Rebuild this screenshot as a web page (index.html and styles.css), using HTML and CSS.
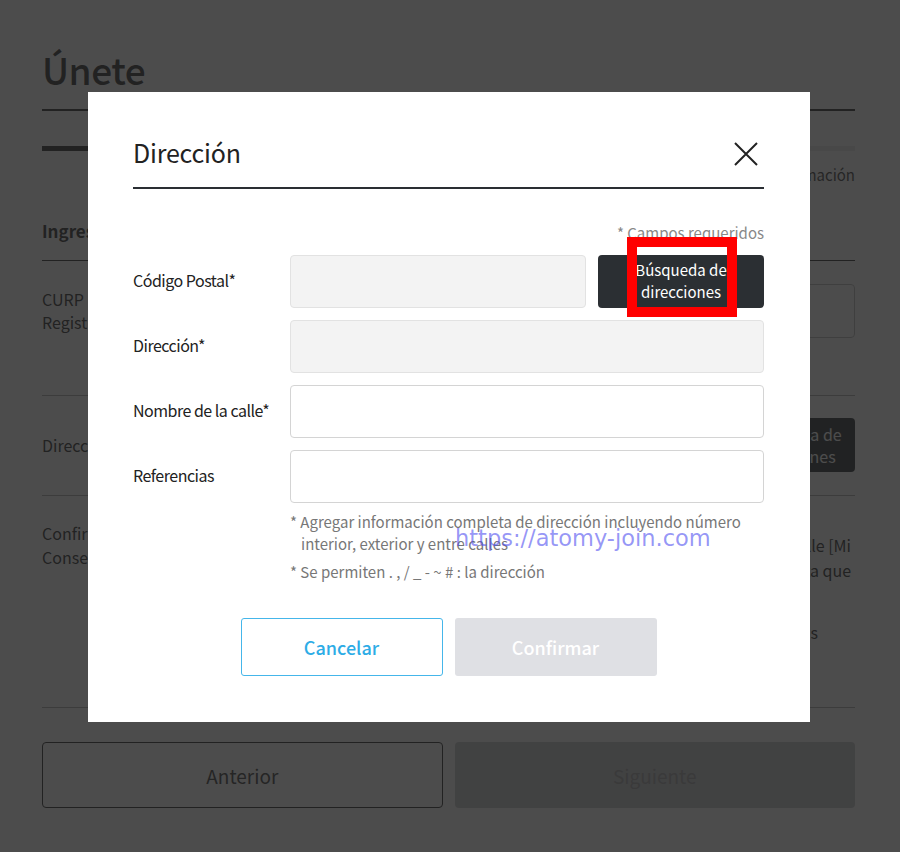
FILE: index.html
```html
<!DOCTYPE html>
<html lang="es">
<head>
<meta charset="utf-8">
<title>Únete</title>
<link rel="stylesheet" href="styles.css">
</head>
<body>
<div class="page">
  <header class="page-head"><h1>Únete</h1></header>
  <div class="steps">
    <div class="step active"><span class="step-bar"></span><span class="step-label">Verificación</span></div>
    <div class="step"><span class="step-bar"></span><span class="step-label">Información</span></div>
    <div class="step"><span class="step-bar"></span><span class="step-label">Confirmación</span></div>
  </div>
  <section class="section">
    <h2 class="section-title">Ingresar información</h2>
    <div class="row row-curp">
      <div class="row-label">CURP (Clave Única de<br>Registro de Población)</div>
      <div class="row-field"><div class="page-input"></div></div>
    </div>
    <div class="row row-addr">
      <div class="row-label">Dirección*</div>
      <div class="row-field"><button class="page-search" type="button">Búsqueda de<br>direcciones</button></div>
    </div>
    <div class="row row-consent">
      <div class="row-label">Confirmación de<br>Consentimiento</div>
      <div class="row-field consent-text">
        <p class="consent-p">Puede consultar los contratos aceptados en la página de detalle [Mi</p>
        <p class="consent-p">Oficina] y la información quedará registrada hasta que</p>
        <p class="consent-p consent-last">Acepto todos los términos</p>
      </div>
    </div>
  </section>
  <div class="page-actions">
    <button class="btn-prev" type="button">Anterior</button>
    <button class="btn-next" type="button">Siguiente</button>
  </div>
</div>

<div class="backdrop">
  <div class="modal">
    <div class="modal-head">
      <h2 class="modal-title">Dirección</h2>
      <button class="modal-close" type="button" aria-label="Cerrar">
        <svg width="24" height="24" viewBox="0 0 24 24"><path d="M1 1 L23 23 M23 1 L1 23" stroke="#222" stroke-width="2" fill="none"/></svg>
      </button>
    </div>
    <p class="required">* Campos requeridos</p>
    <div class="form">
      <div class="form-row">
        <label class="form-label">Código Postal*</label>
        <div class="form-field field-split">
          <div class="input input-disabled input-zip"></div>
          <div class="search-wrap">
            <button class="search-btn" type="button">Búsqueda de<br>direcciones</button>
            <span class="annot"></span>
          </div>
        </div>
      </div>
      <div class="form-row">
        <label class="form-label">Dirección*</label>
        <div class="form-field"><div class="input input-disabled"></div></div>
      </div>
      <div class="form-row">
        <label class="form-label">Nombre de la calle*</label>
        <div class="form-field"><div class="input"></div></div>
      </div>
      <div class="form-row">
        <label class="form-label">Referencias</label>
        <div class="form-field"><div class="input"></div></div>
      </div>
    </div>
    <div class="notes">
      <p class="note">* Agregar información completa de dirección incluyendo número interior, exterior y entre calles</p>
      <p class="note note-gap">* Se permiten . , / _ - ~ # : la dirección</p>
      <span class="watermark">https://atomy-join.com</span>
    </div>
    <div class="modal-actions">
      <button class="btn-cancel" type="button">Cancelar</button>
      <button class="btn-confirm" type="button">Confirmar</button>
    </div>
  </div>
</div>
</body>
</html>
```
FILE: styles.css
```css
* { box-sizing: border-box; }
html, body { margin: 0; padding: 0; }
body {
  font-family: "Noto Sans CJK KR", "Noto Sans", sans-serif;
  color: #222;
  background: #fff;
  width: 900px;
  height: 852px;
  overflow: hidden;
}
button { font-family: inherit; cursor: pointer; }
p, h1, h2 { margin: 0; }

/* ---------- page underneath ---------- */
.page { padding: 0 45px 0 42px; }
.page-head {
  padding-top: 44px;
  height: 111px;
  border-bottom: 2px solid #222;
}
.page-head h1 {
  font-size: 37px;
  font-weight: 500;
  line-height: 50px;
  letter-spacing: -0.5px;
}
.steps {
  display: grid;
  grid-template-columns: repeat(3, 1fr);
  margin-top: 35px;
}
.step { display: flex; flex-direction: column; align-items: flex-end; }
.step-bar { display: block; width: 100%; height: 5px; background: #e8e8e8; }
.step.active .step-bar { background: #222; }
.step-label { font-size: 15px; line-height: 22px; margin-top: 13px; color: #333; }

.section { margin-top: 33px; }
.section-title {
  font-size: 17px;
  font-weight: 700;
  line-height: 24px;
  padding-bottom: 17px;
  border-bottom: 1px solid #222;
}
.row {
  display: flex;
  border-bottom: 1px solid #aaa;
}
.row-label { width: 248px; font-size: 16px; line-height: 23px; }
.row-field { flex: 1; }
.row-curp { padding: 23px 0 57px; align-items: center; }
.page-input { height: 54px; border: 1px solid #bbb; border-radius: 4px; }
.row-addr { padding: 22px 0 23px; align-items: center; justify-content: space-between; }
.row-addr .row-field { display: flex; justify-content: flex-end; }
.page-search {
  width: 124px; height: 54px;
  background: #1f2428; color: #fff;
  border: 0; border-radius: 4px;
  font-size: 16px; line-height: 22px;
}
.row-consent { padding: 25px 0 0; height: 212px; }
.row-consent .row-label { line-height: 24px; }
.consent-text { padding-top: 12px; padding-right: 4px; text-align: right; font-size: 16px; line-height: 25px; }
.consent-p { white-space: nowrap; }
.consent-last { margin-top: 37px; padding-right: 33px; }

.page-actions {
  display: grid;
  grid-template-columns: 1fr 1fr;
  gap: 12px;
  margin-top: 34px;
}
.btn-prev, .btn-next {
  height: 66px;
  border-radius: 4px;
  font-size: 19px;
}
.btn-prev { background: #fff; border: 1px solid #222; color: #333; }
.btn-next { background: #c6c8cb; border: 0; color: #9d9ea1; }

/* ---------- modal ---------- */
.backdrop {
  position: fixed;
  inset: 0;
  background: rgba(35, 35, 35, 0.81);
  display: flex;
  justify-content: center;
  align-items: flex-start;
  padding: 92px 2px 0 0;
}
.modal {
  width: 722px;
  background: #fff;
  padding: 0 46px 46px 45px;
}
.modal-head {
  display: flex;
  justify-content: space-between;
  align-items: center;
  padding: 40px 0 15px;
  border-bottom: 2px solid #2a2e33;
}
.modal-title { font-size: 25px; font-weight: 400; line-height: 40px; letter-spacing: -0.2px; }
.modal-close {
  background: none; border: 0; padding: 0;
  width: 24px; height: 24px; margin: 4px 6px 0 0;
  display: flex;
}
.required {
  margin-top: 33px;
  text-align: right;
  font-size: 15px;
  line-height: 22px;
  color: #888;
}
.form { margin-top: 11px; display: flex; flex-direction: column; gap: 12px; }
.form-row {
  display: grid;
  grid-template-columns: 157px 1fr;
  align-items: center;
  height: 53px;
}
.form-label { font-size: 16px; letter-spacing: -0.5px; padding-bottom: 3px; }
.field-split { display: flex; gap: 12px; }
.input {
  height: 53px;
  border: 1px solid #d4d4d4;
  border-radius: 4px;
  background: #fff;
}
.input-disabled { background: #f3f3f3; border-color: #e2e2e2; }
.input-zip { flex: 1; }
.search-wrap { position: relative; width: 166px; }
.search-btn {
  width: 100%; height: 53px;
  background: #2b2f33; color: #fff;
  border: 0; border-radius: 4px;
  font-size: 15px; line-height: 22px;
  padding-bottom: 2px;
}
.annot {
  position: absolute;
  left: 29px; top: -18px;
  width: 110px; height: 80px;
  border: 10px solid #ff0000;
  pointer-events: none;
}
.notes {
  position: relative;
  margin: 8px 0 0 157px;
  color: #777;
  font-size: 15px;
  line-height: 22px;
}
.note { padding-left: 11px; text-indent: -11px; padding-right: 20px; }
.note-gap { margin-top: 6px; }
.watermark {
  position: absolute;
  left: 165px; top: 7px;
  font-family: "DejaVu Sans", sans-serif;
  font-size: 22.5px;
  line-height: 40px;
  color: rgba(80, 80, 240, 0.6);
  white-space: nowrap;
}
.modal-actions {
  display: flex;
  justify-content: center;
  gap: 12px;
  margin-top: 35px;
}
.btn-cancel, .btn-confirm {
  width: 202px; height: 58px;
  border-radius: 3px;
  font-size: 18px;
  font-weight: 500;
}
.btn-cancel { background: #fff; border: 1px solid #45b6ea; color: #2dace6; }
.btn-confirm { background: #dfe0e4; border: 0; color: #fff; }
```
